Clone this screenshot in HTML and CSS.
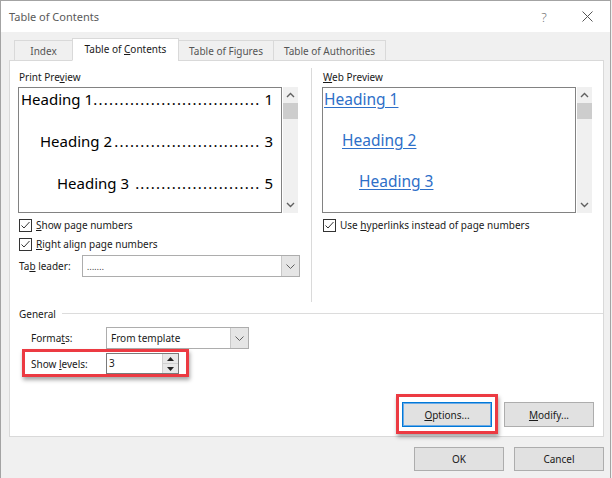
FILE: index.html
```html
<!DOCTYPE html>
<html>
<head>
<meta charset="utf-8">
<link rel="stylesheet" href="styles.css">
</head>
<body>
<div class="window">
  <div class="titlebar">
    <span class="title">Table of Contents</span>
    <span class="tb-btn help">?</span>
    <span class="tb-btn close"><svg width="11" height="11" viewBox="0 0 11 11"><path d="M0.5 0.5 L10.5 10.5 M10.5 0.5 L0.5 10.5" stroke="#555" stroke-width="1" fill="none"/></svg></span>
  </div>
  <div class="body">
    <div class="tabs">
      <div class="tab tab-index"><span>Index</span></div>
      <div class="tab active tab-toc"><span>Table of <u>C</u>ontents</span></div>
      <div class="tab tab-fig"><span>Table of Figures</span></div>
      <div class="tab tab-auth"><span>Table of Authorities</span></div>
    </div>
    <div class="panel">
      <div class="top">
        <div class="col col-left">
          <div class="label">Print Pre<u>v</u>iew</div>
          <div class="preview-wrap">
            <div class="preview print">
              <div class="toc-row lvl1"><span class="h">Heading 1</span><span class="dots">................................</span><span class="num">1</span></div>
              <div class="toc-row lvl2"><span class="h">Heading 2</span><span class="dots">............................</span><span class="num">3</span></div>
              <div class="toc-row lvl3"><span class="h">Heading 3</span><span class="dots">........................</span><span class="num">5</span></div>
            </div>
            <div class="scrollbar">
              <div class="sb-arrow"><svg width="9" height="6" viewBox="0 0 9 6"><path d="M1 5 L4.5 1.5 L8 5" stroke="#606060" stroke-width="1.4" fill="none"/></svg></div>
              <div class="sb-thumb"></div>
              <div class="sb-track"></div>
              <div class="sb-arrow"><svg width="9" height="6" viewBox="0 0 9 6"><path d="M1 1 L4.5 4.5 L8 1" stroke="#606060" stroke-width="1.4" fill="none"/></svg></div>
            </div>
          </div>
          <div class="check-row first">
            <span class="checkbox"><svg width="13" height="13" viewBox="0 0 13 13"><rect x="0.5" y="0.5" width="12" height="12" fill="#fff" stroke="#333"/><path d="M2.5 6.5 L5 9 L10.5 3" stroke="#333" stroke-width="1" fill="none"/></svg></span>
            <span><u>S</u>how page numbers</span>
          </div>
          <div class="check-row">
            <span class="checkbox"><svg width="13" height="13" viewBox="0 0 13 13"><rect x="0.5" y="0.5" width="12" height="12" fill="#fff" stroke="#333"/><path d="M2.5 6.5 L5 9 L10.5 3" stroke="#333" stroke-width="1" fill="none"/></svg></span>
            <span><u>R</u>ight align page numbers</span>
          </div>
          <div class="field-row leader-row">
            <span class="leader-label">Ta<u>b</u> leader:</span>
            <div class="combo leader-combo">
              <span class="combo-value leader-dots">.......</span>
              <span class="combo-btn"><svg width="9" height="5" viewBox="0 0 9 5"><path d="M0.5 0.5 L4.5 4.5 L8.5 0.5" stroke="#606060" stroke-width="1" fill="none"/></svg></span>
            </div>
          </div>
        </div>
        <div class="divider"></div>
        <div class="col col-right">
          <div class="label"><u>W</u>eb Preview</div>
          <div class="preview-wrap">
            <div class="preview web">
              <div class="web-row lvl1"><span class="link">Heading 1</span></div>
              <div class="web-row lvl2"><span class="link">Heading 2</span></div>
              <div class="web-row lvl3"><span class="link">Heading 3</span></div>
            </div>
            <div class="scrollbar">
              <div class="sb-arrow"><svg width="9" height="6" viewBox="0 0 9 6"><path d="M1 5 L4.5 1.5 L8 5" stroke="#606060" stroke-width="1.4" fill="none"/></svg></div>
              <div class="sb-thumb"></div>
              <div class="sb-track"></div>
              <div class="sb-arrow"><svg width="9" height="6" viewBox="0 0 9 6"><path d="M1 1 L4.5 4.5 L8 1" stroke="#606060" stroke-width="1.4" fill="none"/></svg></div>
            </div>
          </div>
          <div class="check-row first">
            <span class="checkbox"><svg width="13" height="13" viewBox="0 0 13 13"><rect x="0.5" y="0.5" width="12" height="12" fill="#fff" stroke="#333"/><path d="M2.5 6.5 L5 9 L10.5 3" stroke="#333" stroke-width="1" fill="none"/></svg></span>
            <span>Use <u>h</u>yperlinks instead of page numbers</span>
          </div>
        </div>
      </div>
      <div class="general">
        <div class="group-title"><span>General</span></div>
        <div class="field-row formats-row">
          <span class="field-label">Forma<u>t</u>s:</span>
          <div class="combo formats-combo">
            <span class="combo-value">From template</span>
            <span class="combo-btn"><svg width="9" height="5" viewBox="0 0 9 5"><path d="M0.5 0.5 L4.5 4.5 L8.5 0.5" stroke="#606060" stroke-width="1" fill="none"/></svg></span>
          </div>
        </div>
        <div class="field-row levels-row highlighted">
          <span class="field-label">Show <u>l</u>evels:</span>
          <div class="spin">
            <span class="spin-value">3</span>
            <span class="spin-btns">
              <span class="spin-btn"><svg width="7" height="4" viewBox="0 0 7 4"><path d="M0 4 L3.5 0 L7 4 Z" fill="#222"/></svg></span>
              <span class="spin-btn"><svg width="7" height="4" viewBox="0 0 7 4"><path d="M0 0 L3.5 4 L7 0 Z" fill="#222"/></svg></span>
            </span>
          </div>
        </div>
      </div>
      <div class="panel-buttons">
        <button class="btn default highlighted"><u>O</u>ptions...</button>
        <button class="btn"><u>M</u>odify...</button>
      </div>
    </div>
    <div class="footer">
      <button class="btn">OK</button>
      <button class="btn">Cancel</button>
    </div>
  </div>
</div>
</body>
</html>
```
FILE: styles.css
```css
* { box-sizing: border-box; }
html, body { margin: 0; padding: 0; background: #f0f0f0; }
body {
  font-family: "Noto Sans", "Open Sans", sans-serif;
  font-size: 10px;
  color: #1a1a1a;
}
u { text-decoration: underline; text-underline-offset: 1px; }

.window {
  width: 611px;
  height: 478px;
  border: 1px solid #a3a3a3;
  border-bottom: none;
  background: #f0f0f0;
  display: flex;
  flex-direction: column;
}

.titlebar {
  height: 31px;
  background: #fff;
  display: flex;
  align-items: center;
  padding-left: 8px;
  flex: none;
}
.title { flex: 1; font-size: 11px; color: #5a5a5a; }
.tb-btn { display: flex; align-items: center; justify-content: center; height: 31px; }
.help { width: 40px; font-size: 13px; color: #707070; font-weight: 300; }
.close { width: 46px; }

.body {
  flex: 1;
  display: flex;
  flex-direction: column;
  padding: 6px 0 0 8px;
}

.tabs {
  display: flex;
  align-items: flex-end;
  padding-left: 5px;
  height: 23px;
  margin-bottom: -1px;
  position: relative;
  z-index: 1;
}
.tab {
  height: 21px;
  border: 1px solid #d9d9d9;
  background: #f0f0f0;
  color: #555;
  display: flex;
  align-items: center;
  justify-content: center;
  margin-left: -1px;
  line-height: 1;
  white-space: nowrap;
}
.tab-index { width: 59px; margin-left: 0; }
.tab-toc { width: 107px; }
.tab-fig { width: 96px; }
.tab-auth { width: 113px; }
.tab.active {
  height: 23px;
  background: #fff;
  border-bottom-color: #fff;
  color: #1a1a1a;
  padding-bottom: 1px;
}

.panel {
  width: 595px;
  height: 377px;
  background: #fff;
  border: 1px solid #d9d9d9;
  display: flex;
  flex-direction: column;
}

.top {
  display: flex;
  height: 241px;
  padding: 9px 0 0 8px;
}
.col { display: flex; flex-direction: column; }
.col-left { width: 282px; }
.col-right { width: 270px; margin-left: 10px; }
.divider { width: 1px; background: #dadada; margin-left: 11px; margin-top: -2px; }

.label { height: 15px; line-height: 15px; padding-left: 1px; margin-bottom: 2px; }

.preview-wrap { display: flex; height: 126px; }
.preview {
  border: 1px solid #828282;
  background: #fff;
  height: 126px;
  overflow: hidden;
}
.print { width: 264px; padding: 0 8px 0 2px; display: flex; flex-direction: column; gap: 20px; }
.web { width: 254px; padding: 0 0 0 1px; display: flex; flex-direction: column; gap: 19px; }

.toc-row {
  display: flex;
  height: 22px;
  line-height: 22px;
  font-size: 15px;
  color: #000;
  white-space: nowrap;
}
.toc-row .h { flex: none; }
.toc-row .dots {
  flex: 1;
  text-align: right;
  letter-spacing: 1.2px;
}
.toc-row .num { flex: none; padding-left: 4px; }
.lvl2.toc-row { padding-left: 19px; }
.lvl3.toc-row { padding-left: 36px; }

.web-row { height: 22px; line-height: 22px; font-size: 15.5px; white-space: nowrap; }
.web-row.lvl2 { padding-left: 18px; }
.web-row.lvl3 { padding-left: 35px; }
.link { color: #2e6fc8; text-decoration: underline; text-underline-offset: 2px; }

.scrollbar {
  width: 15px;
  margin-left: 1px;
  background: #f0f0f0;
  display: flex;
  flex-direction: column;
}
.sb-arrow { height: 16px; display: flex; align-items: center; justify-content: center; }
.sb-thumb { height: 16px; background: #cdcdcd; }
.sb-track { flex: 1; }

.check-row {
  display: flex;
  align-items: center;
  height: 16px;
  margin-top: 3px;
  padding-left: 1px;
  gap: 4px;
}
.check-row.first { margin-top: 4px; }
.checkbox { width: 13px; height: 13px; display: flex; }

.field-row { display: flex; align-items: center; }
.leader-row { margin-top: 3px; height: 22px; }
.leader-label { width: 64px; padding-left: 1px; }

.combo {
  height: 22px;
  border: 1px solid #adadad;
  background: #fff;
  display: flex;
  align-items: center;
}
.leader-combo { width: 218px; }
.combo-value { flex: 1; padding-left: 4px; }
.leader-dots { font-size: 8px; letter-spacing: 0.3px; padding-top: 1px; }
.combo-btn {
  width: 18px;
  height: 20px;
  background: #e5e5e5;
  border-left: 1px solid #c8c8c8;
  display: flex;
  align-items: center;
  justify-content: center;
}

.general {
  flex: 1;
  padding: 4px 0 0 0;
  display: flex;
  flex-direction: column;
}
.group-title {
  display: flex;
  align-items: center;
  height: 15px;
  padding-left: 9px;
}
.group-title::after {
  content: "";
  flex: 1;
  height: 1px;
  background: #dcdcdc;
  margin-left: 6px;
}

.field-label { width: 75px; }
.formats-row { margin-top: 6px; padding-left: 21px; height: 22px; }
.formats-combo { width: 143px; }

.levels-row {
  margin-top: 4px;
  margin-left: 12px;
  width: 167px;
  padding-left: 9px;
  height: 21px;
  position: relative;
}
.spin {
  width: 73px;
  height: 21px;
  border: 1px solid #7a7a7a;
  display: flex;
  background: #fff;
}
.spin-value { flex: 1; padding-left: 2px; line-height: 19px; }
.spin-btns { width: 16px; display: flex; flex-direction: column; border-left: 1px solid #d0d0d0; }
.spin-btn { flex: 1; display: flex; align-items: center; justify-content: center; background: #e8e8e8; }
.spin-btn + .spin-btn { border-top: 1px solid #d0d0d0; }

.highlighted::after {
  content: "";
  position: absolute;
  border: 3px solid #ec3a42;
  box-shadow: 1px 3px 4px rgba(0, 0, 0, 0.35);
  pointer-events: none;
}
.levels-row.highlighted::after { top: -4px; bottom: -3px; left: 0; right: 0; }

.panel-buttons {
  display: flex;
  justify-content: flex-end;
  gap: 12px;
  padding: 0 9px 9px 0;
}
.btn {
  width: 90px;
  height: 25px;
  background: #e1e1e1;
  border: 1px solid #adadad;
  font-family: "Noto Sans", "Open Sans", sans-serif;
  font-size: 10px;
  color: #1a1a1a;
  padding: 0;
  position: relative;
}
.btn.default { border-color: #0078d7; box-shadow: inset 0 0 0 1px #6aaae6; }
.btn.highlighted::after { top: -9px; bottom: -8px; left: -7px; right: -7px; }

.footer {
  display: flex;
  justify-content: flex-end;
  gap: 10px;
  padding: 10px 6px 0 0;
}
.footer .btn { height: 24px; }
```
